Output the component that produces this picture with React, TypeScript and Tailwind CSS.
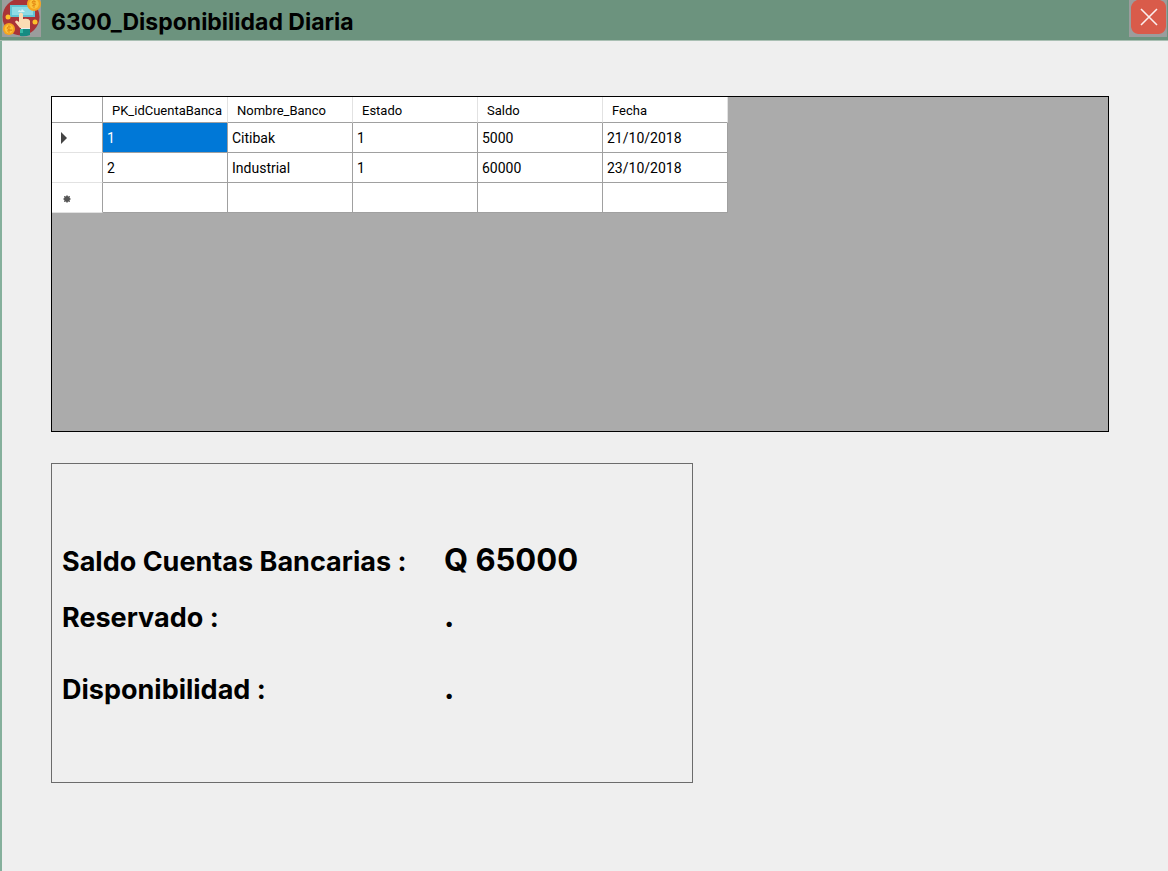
import React from "react";

const columns = ["PK_idCuentaBanca", "Nombre_Banco", "Estado", "Saldo", "Fecha"];

const rows = [
  ["1", "Citibak", "1", "5000", "21/10/2018"],
  ["2", "Industrial", "1", "60000", "23/10/2018"],
];

function AppIcon() {
  return (
    <svg viewBox="0 0 39 37" className="h-[37px] w-[39px] shrink-0" aria-hidden="true">
      <rect width="39" height="37" fill="#9b9d9d" />
      <circle cx="19" cy="17" r="18.5" fill="#a93438" />
      <rect x="8" y="5" width="25" height="12" fill="#62c3d3" />
      <rect x="10" y="7" width="21" height="8" fill="#8edbe5" />
      <path d="M16 12l1-2 2 1 1-2 2 2 1 1z" fill="#d9f3f5" />
      <path d="M17 14q2-3 4 0v5q6-1 7 2v7H18l-5-6q1-3 4 0z" fill="#fbdcb4" />
      <path d="M19 28h9v2h-9z" fill="#e9eef0" />
      <path d="M18 29h10v6q-5 2-10 1z" fill="#168b82" />
      <path d="M18 29h3v4h-3z" fill="#37b8a5" />
      <circle cx="6" cy="17" r="2.5" fill="#fdc12b" />
      <circle cx="33" cy="22" r="2.5" fill="#fdc12b" />
      <circle cx="32" cy="4" r="7" fill="#f6a51f" />
      <circle cx="32" cy="4" r="4.8" fill="#fcc43b" />
      <path d="M34 2q-4-2-4 0t3 2-3 2M32 0v8" fill="none" stroke="#e58c16" />
      <circle cx="7" cy="29" r="6" fill="#f6a51f" />
      <circle cx="7" cy="29" r="4.2" fill="#fcc43b" />
      <path d="M9 27q-4-1-4 1t4 2-4 1M7 25v8" fill="none" stroke="#e58c16" />
    </svg>
  );
}

function CloseIcon() {
  return (
    <svg viewBox="0 0 38 37" className="h-[37px] w-[38px]" aria-hidden="true">
      <rect width="38" height="37" fill="#9b9d9d" />
      <path d="M8 0h23q6 2 6 7v20q-1 6-7 7H9q-6-1-7-7V7q1-5 6-7z" fill="#d95b4a" />
      <path d="M12 9l16 16M28 9L12 25" stroke="#fbeeee" strokeWidth="1.6" />
    </svg>
  );
}

function TitleBar() {
  return (
    <header className="flex h-[41px] items-start border-b border-[#a9bfb3] bg-[#6c937e] pl-0.5">
      <AppIcon />
      <h1 className="flex-1 pt-2 pl-2.5 text-[23px] leading-7 font-bold">6300_Disponibilidad Diaria</h1>
      <button type="button" aria-label="Cerrar" className="mr-px">
        <CloseIcon />
      </button>
    </header>
  );
}

const cell = "border-r border-b border-[#a0a0a0] px-1 text-left font-normal";

function AccountsGrid() {
  return (
    <section className="min-h-[336px] border border-black bg-[#ababab]">
      <table className="w-[676px] table-fixed border-separate border-spacing-0 bg-white font-[Roboto,sans-serif] text-sm leading-5">
        <colgroup>
          <col className="w-[51px]" />
          {columns.map((name) => (
            <col key={name} className="w-[125px]" />
          ))}
        </colgroup>
        <thead>
          <tr className="h-[26px]">
            <td className="border-r border-b border-[#a0a0a0]" />
            {columns.map((name) => (
              <th
                key={name}
                scope="col"
                className="border-r border-b border-r-[#e2e2e2] border-b-[#a0a0a0] pt-0.5 pl-[9px] text-left text-[13px] font-normal whitespace-nowrap"
              >
                {name}
              </th>
            ))}
          </tr>
        </thead>
        <tbody>
          {rows.map((row, r) => (
            <tr key={row[0]} className="h-[30px]">
              <td className="border-r border-b border-r-[#a0a0a0] border-b-[#e2e2e2] pl-2">
                {r === 0 && (
                  <svg viewBox="0 0 8 12" className="h-3 w-2" aria-hidden="true">
                    <path d="M1 0l6 6-6 6z" fill="#444" />
                  </svg>
                )}
              </td>
              {row.map((value, c) => (
                <td key={columns[c]} className={r === 0 && c === 0 ? `${cell} bg-[#0078d7] text-white` : cell}>
                  {value}
                </td>
              ))}
            </tr>
          ))}
          <tr className="h-[30px]">
            <td className="border-r border-b border-r-[#a0a0a0] border-b-[#e2e2e2] pt-0.5 pl-[11px]">
              <svg viewBox="0 0 8 8" className="h-2 w-2" aria-hidden="true">
                <circle cx="4" cy="4" r="3" fill="#555" />
                <path d="M4 0v8M0 4h8M1 1l6 6M7 1L1 7" stroke="#555" strokeWidth=".8" />
              </svg>
            </td>
            {columns.map((name) => (
              <td key={name} className={cell} />
            ))}
          </tr>
        </tbody>
      </table>
    </section>
  );
}

function Summary() {
  return (
    <section className="mt-[31px] min-h-80 w-full max-w-[642px] border border-[#6b6b6b] px-2.5 pt-[78px]">
      <dl className="grid grid-cols-[382px_1fr] text-[27px] leading-10 font-bold">
        <dt>Saldo Cuentas Bancarias :</dt>
        <dd className="text-[31px] leading-9">Q 65000</dd>
        <dt className="pt-4">Reservado :</dt>
        <dd className="pt-4 text-[31px] leading-9">.</dd>
        <dt className="pt-8">Disponibilidad :</dt>
        <dd className="pt-8 text-[31px] leading-9">.</dd>
      </dl>
    </section>
  );
}

export default function App() {
  return (
    <div className="flex min-h-screen flex-col bg-[#efefef] font-['Century_Gothic',Inter,sans-serif] text-black">
      <TitleBar />
      <main className="flex-1 border-l-2 border-[#85b09c] pt-[55px] pr-[59px] pb-10 pl-[49px]">
        <AccountsGrid />
        <Summary />
      </main>
    </div>
  );
}
